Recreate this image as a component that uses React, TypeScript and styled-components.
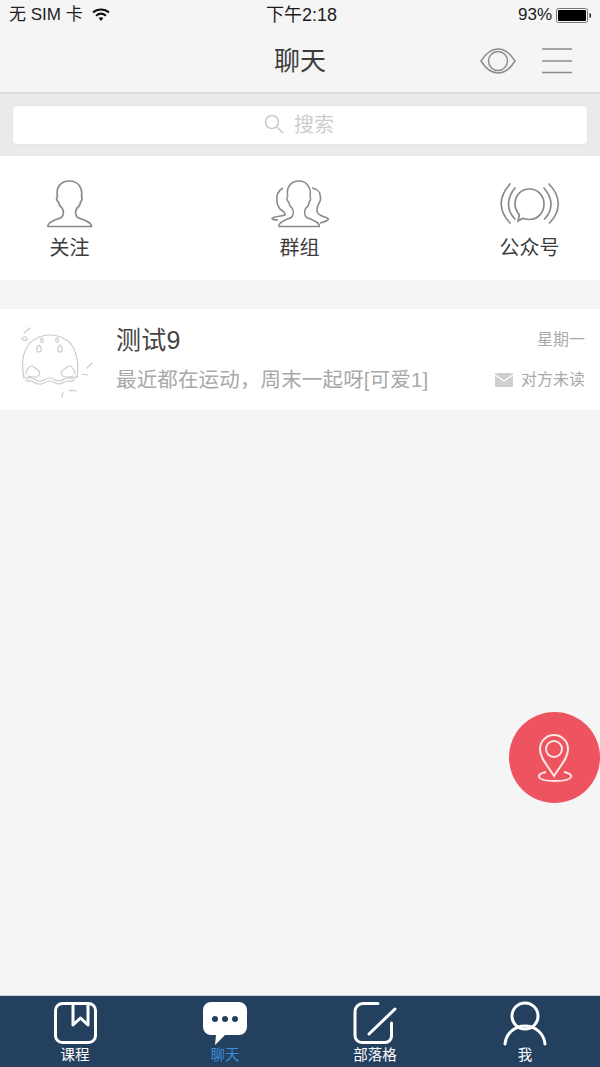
import React from "react";
import styled, { createGlobalStyle } from "styled-components";

const FONT = `"Liberation Sans", "Noto Sans CJK SC", sans-serif`;

const Global = createGlobalStyle`
  html, body { margin: 0; padding: 0; background: #f5f5f5; }
  * { box-sizing: border-box; }
`;

const Page = styled.div`
  position: relative;
  width: 600px;
  height: 1067px;
  overflow: hidden;
  display: flex;
  flex-direction: column;
  background: #f5f5f5;
  font-family: ${FONT};
`;

const StatusBar = styled.div`
  height: 30px;
  padding: 0 8px 0 9px;
  display: grid;
  grid-template-columns: 1fr auto 1fr;
  align-items: start;
  color: #222;
`;
const StatusLeft = styled.div`
  display: flex;
  align-items: center;
  gap: 9px;
  height: 30px;
  font-size: 17px;
  line-height: 20px;
  padding-bottom: 1px;
`;
const StatusTime = styled.div`
  font-size: 18px;
  line-height: 20px;
  height: 30px;
  padding: 5px 0 0 2px;
  color: #1c1c1c;
`;
const StatusRight = styled.div`
  display: flex;
  align-items: center;
  justify-content: flex-end;
  gap: 4px;
  height: 30px;
  font-size: 17px;
  line-height: 20px;
`;

const NavBar = styled.div`
  position: relative;
  height: 64px;
  display: flex;
  align-items: center;
  justify-content: center;
  border-bottom: 2px solid #dcdcdc;
  padding-bottom: 6px;
`;
const NavTitle = styled.div`
  font-size: 26px;
  color: #3d3d3d;
`;
const NavActions = styled.div`
  position: absolute;
  right: 28px;
  top: 17px;
  display: flex;
  align-items: center;
  gap: 26px;
`;

const SearchBand = styled.div`
  height: 62px;
  padding: 11px 12px 0;
  background: #e9eaec;
`;
const SearchBox = styled.div`
  height: 40px;
  border-radius: 5px;
  background: #fff;
  border: 1px solid #e4e5e6;
  display: flex;
  align-items: center;
  justify-content: center;
  gap: 10px;
  padding: 0 2px 3px 0;
  font-size: 20px;
  color: #cdcdcd;
`;

const Shortcuts = styled.div`
  height: 124px;
  background: #fff;
  display: grid;
  grid-template-columns: 139px 1fr 139px;
  margin-bottom: 29px;
  padding-right: 1px;
`;
const Shortcut = styled.div`
  display: flex;
  flex-direction: column;
  align-items: center;
  padding-top: 24px;
`;
const ShortcutIcon = styled.div<{ $drop?: number }>`
  height: 50px;
  display: flex;
  align-items: flex-start;
  padding-top: ${(p) => p.$drop ?? 0}px;
`;
const ShortcutLabel = styled.div`
  font-size: 20px;
  line-height: 26px;
  color: #3c3c3c;
  margin-top: 5px;
`;

const ChatRow = styled.div`
  height: 101px;
  background: #fff;
  display: flex;
  align-items: stretch;
`;
const Avatar = styled.div`
  width: 116px;
  padding: 15px 0 0 19px;
`;
const ChatMain = styled.div`
  flex: 1;
  padding-top: 16px;
`;
const ChatName = styled.div`
  font-size: 25px;
  line-height: 30px;
  color: #444;
  letter-spacing: 0.3px;
`;
const ChatPreview = styled.div`
  margin-top: 11px;
  font-size: 20.5px;
  line-height: 28px;
  color: #a9a9a9;
  white-space: nowrap;
  letter-spacing: 0.15px;
`;
const ChatMeta = styled.div`
  padding: 20px 15px 0 0;
  display: flex;
  flex-direction: column;
  align-items: flex-end;
  font-size: 16px;
  color: #a9a9a9;
`;
const MetaLine = styled.div`
  display: flex;
  align-items: center;
  gap: 8px;
  line-height: 22px;
  margin-bottom: 18px;
`;

const Spacer = styled.div`
  flex: 1;
`;

const Fab = styled.div`
  position: absolute;
  left: 509px;
  top: 712px;
  width: 91px;
  height: 91px;
  border-radius: 50%;
  background: #ed5460;
  display: flex;
  align-items: center;
  justify-content: center;
  padding-top: 1px;
`;

const TabBar = styled.div`
  height: 72px;
  background: #24405f;
  border-top: 1px solid #c9d2da;
  display: grid;
  grid-template-columns: repeat(4, 150px);
`;
const Tab = styled.div<{ $active?: boolean }>`
  display: flex;
  flex-direction: column;
  align-items: center;
  padding-top: 5px;
  color: ${(p) => (p.$active ? "#3a8fd8" : "#fff")};
  font-size: 14.5px;
  line-height: 16px;
`;
const TabIcon = styled.div`
  height: 46px;
`;

const PERSON_PATH =
  "M1 46.500H44.500C45 44 40 41 36 39.500C32 38 29 38 28.600 33C28.500 31 29 29.500 30 28C32 27 33 25 33.500 22C35 21 35.500 18 34.500 16C36 8 31 1 22.500 1C14 1 8.500 7 10.500 16C9 18 9.500 21 11.500 22C12 25 13.500 27 15 28C16 29.500 16.500 31 16.400 33C16 38 13 38 9 39.500C5 41 0 44 1 46.500Z";

const Person = () => (
  <svg width="46" height="48" viewBox="0 0 46 48" fill="none" stroke="#8a8a8a" strokeWidth="1.700">
    <path d={PERSON_PATH} />
  </svg>
);

const Group = () => (
  <svg width="60" height="48" viewBox="0 0 60 48" fill="none" stroke="#8a8a8a" strokeWidth="1.600">
    <path d={PERSON_PATH} transform="translate(8 0) scale(0.93 1)" />
    <path d="M13 8C8 11 6 16 7 21C6.500 25 9 27 10 29C13 31 16 33 15 35C10 37 3 36 2 38.500C3 40 6 40 8 40" />
    <path d="M42 8C47 9 50 12 50 15C51 18 50.500 21 49 23C48.500 25 47 27 47 29C46.500 32 48 34 51 35.500C54 37 58 38 58.500 39C58 41 54 42 50 43" />
  </svg>
);

const Broadcast = () => (
  <svg width="60" height="44" viewBox="0 0 60 44" fill="none" stroke="#8a8a8a" strokeWidth="1.700" strokeLinecap="round">
    <path d="M10 1C3 9 1 15 1.200 21c.2 7 3 13 8.800 19" />
    <path d="M15 5C10 11 8.500 16 8.500 21c0 6 2.500 11 6.500 15" />
    <path d="M49 1c7 7 9.400 14 9.200 20.500-.2 7-3.200 13-8.700 18.500" />
    <path d="M44 5c5 6 7 11 7 16 0 6-2.500 11-6.500 15" />
    <path d="M18 38l1.400-6.200C16.500 28.500 15 25 15 21c0-9 6.300-15 14.500-15s14.500 6.500 14.500 15-6 15.500-14.500 15.500c-2.600 0-4.600-.6-6.500-1.300-1.600 1-3.400 2.300-5 2.800z" />
  </svg>
);

const Ghost = () => (
  <svg width="78" height="78" viewBox="0 0 78 78" fill="none" stroke="#cbcbcb" strokeWidth="1.200" strokeLinecap="round">
    <path d="M5 54C2 40 4 28 10 20C15 14 24 11 31 11C38 11 47 14 52 20C58 28 60 40 58 54" />
    <path d="M4 52c3 4 6 1 9 2s5 4 9 3 5-3 9-3 5 3 9 3 5-3 9-3 5 2 9-2" />
    <path d="M7 56c3 3 4 0 6 1s5 4 9 3 5-3 9-3 5 3 9 3 5-3 9-3 4 1 6-1" />
    <path d="M7 50C7 46 10 42 13 42C16 43 16 45 19 46C22 48 21 52 17 53C14 53 11 53 9 52" />
    <path d="M56 50C56 46 53 42 50 42C47 43 47 45 44 46C41 48 42 52 46 53C49 53 52 53 54 52" />
    <path d="M20 21c-3 2.500-3 7 0 7s3-4.500 0-7z" />
    <path d="M23 14c-1.800 1-1.800 4.500 0 4.500s1.800-3.500 0-4.500z" />
    <path d="M41 21c3 2.500 3 7 0 7s-3-4.500 0-7z" />
    <path d="M38 14c1.800 1 1.800 4.500 0 4.500s-1.800-3.500 0-4.500z" />
    <path d="M11 4c-2 2-4 3-6 5" />
    <path d="M5 13c-2 0-3 2-1 3s5 0 4-2-2-1-3-1z" />
    <path d="M73 39c-2 2-4 4-5 5" />
    <path d="M69 51l-6-1" />
    <path d="M50 67c3-1 5-1 7 0" />
    <path d="M44 69c-1 1-1 2-1 4" />
  </svg>
);

const Pin = () => (
  <svg width="38" height="48" viewBox="0 0 38 48" fill="none" stroke="#fbe6e6" strokeWidth="2">
    <path d="M18 42C13 33 4 25 4 15a14 14 0 0 1 28 0c0 10-9 18-14 27z" />
    <circle cx="18" cy="15" r="8" />
    <path d="M10 38c-5 1-8 3-7 5 1 2.500 8 4 16 4s15-1.500 16-4c1-2-2-4-7-5" />
  </svg>
);

export default function App() {
  return (
    <Page>
      <Global />
      <StatusBar>
        <StatusLeft>
          <span>无 SIM 卡</span>
          <svg width="18" height="13" viewBox="0 0 18 13">
            <path d="M9 13l-2.400-3c1.400-1.100 3.400-1.100 4.800 0z" fill="#111" />
            <path d="M1 4.500C5.500.5 12.500.5 17 4.500M4 7.700c3-2.500 7-2.500 10 0" fill="none" stroke="#111" strokeWidth="2" />
          </svg>
        </StatusLeft>
        <StatusTime>下午2:18</StatusTime>
        <StatusRight>
          <span>93%</span>
          <svg width="36" height="15" viewBox="0 0 36 15">
            <rect x=".5" y=".5" width="31" height="14" rx="2" fill="none" stroke="#777" />
            <rect x="2" y="2" width="28" height="11" rx="1" fill="#000" />
            <path d="M33.500 5c1 0 1.500 1 1.500 2.500S34.500 10 33.500 10z" fill="#111" />
          </svg>
        </StatusRight>
      </StatusBar>
      <NavBar>
        <NavTitle>聊天</NavTitle>
        <NavActions>
          <svg width="36" height="28" viewBox="0 0 36 28" fill="none" stroke="#8c8c8c" strokeWidth="1.500">
            <path d="M1 14C6 6 12 2 18 2S30 6 35 14C30 22 24 26 18 26S6 22 1 14z" />
            <circle cx="18" cy="14" r="9.500" />
          </svg>
          <svg width="30" height="26" viewBox="0 0 30 26" stroke="#8c8c8c" strokeWidth="1.300">
            <path d="M0 1h30M0 13h30M0 24.500h30" />
          </svg>
        </NavActions>
      </NavBar>
      <SearchBand>
        <SearchBox>
          <svg width="20" height="20" viewBox="0 0 20 20" fill="none" stroke="#c9c9c9" strokeWidth="1.500">
            <circle cx="8" cy="8" r="6.500" />
            <path d="M13 13l6 6" />
          </svg>
          <span>搜索</span>
        </SearchBox>
      </SearchBand>
      <Shortcuts>
        <Shortcut>
          <ShortcutIcon><Person /></ShortcutIcon>
          <ShortcutLabel>关注</ShortcutLabel>
        </Shortcut>
        <Shortcut>
          <ShortcutIcon><Group /></ShortcutIcon>
          <ShortcutLabel>群组</ShortcutLabel>
        </Shortcut>
        <Shortcut>
          <ShortcutIcon $drop={3}><Broadcast /></ShortcutIcon>
          <ShortcutLabel>公众号</ShortcutLabel>
        </Shortcut>
      </Shortcuts>
      <ChatRow>
        <Avatar><Ghost /></Avatar>
        <ChatMain>
          <ChatName>测试9</ChatName>
          <ChatPreview>最近都在运动，周末一起呀[可爱1]</ChatPreview>
        </ChatMain>
        <ChatMeta>
          <MetaLine>星期一</MetaLine>
          <MetaLine>
            <svg width="18" height="14" viewBox="0 0 18 14">
              <rect width="18" height="14" rx="1" fill="#cfcfcf" />
              <path d="M0 2l9 6 9-6" fill="none" stroke="#fff" strokeWidth="1.200" />
            </svg>
            对方未读
          </MetaLine>
        </ChatMeta>
      </ChatRow>
      <Spacer />
      <Fab><Pin /></Fab>
      <TabBar>
        <Tab>
          <TabIcon>
            <svg width="44" height="46" viewBox="0 0 44 46" fill="none" stroke="#fff" strokeWidth="3" strokeLinejoin="round">
              <rect x="2.500" y="2.500" width="40" height="39" rx="7" />
              <path d="M20 2.500V24l7.500-7 7.500 7V2.500" />
            </svg>
          </TabIcon>
          课程
        </Tab>
        <Tab $active>
          <TabIcon>
            <svg width="44" height="46" viewBox="0 0 44 46">
              <path d="M8 1h28a8 8 0 0 1 8 8v17a8 8 0 0 1-8 8H22l-10 10 1-10H8a8 8 0 0 1-8-8V9a8 8 0 0 1 8-8z" fill="#fff" />
              <circle cx="12" cy="18" r="3" fill="#24405f" />
              <circle cx="22" cy="18" r="3" fill="#24405f" />
              <circle cx="32" cy="18" r="3" fill="#24405f" />
            </svg>
          </TabIcon>
          聊天
        </Tab>
        <Tab>
          <TabIcon>
            <svg width="44" height="46" viewBox="0 0 44 46" fill="none" stroke="#fff" strokeWidth="3" strokeLinecap="round">
              <path d="M25 2.500H10a8 8 0 0 0-8 8v24a7 7 0 0 0 7 7h23a6.500 6.500 0 0 0 6.500-6.500V22" />
              <path d="M16 33L42 8" />
            </svg>
          </TabIcon>
          部落格
        </Tab>
        <Tab>
          <TabIcon>
            <svg width="44" height="46" viewBox="0 0 44 46" fill="none" stroke="#fff" strokeWidth="3" strokeLinecap="round">
              <circle cx="22" cy="15" r="13" />
              <path d="M2 43c1-10 9-18 20-18s19 8 20 18" />
            </svg>
          </TabIcon>
          我
        </Tab>
      </TabBar>
    </Page>
  );
}
